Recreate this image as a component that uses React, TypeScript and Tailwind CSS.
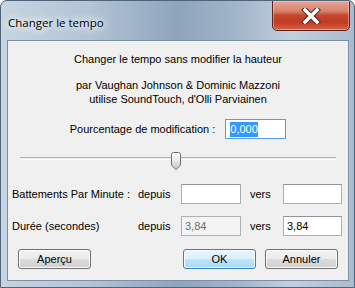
import React from "react";

const font = {fontFamily: '"Liberation Sans", Arial, sans-serif'};

const Button = ({label, primary}: { label: string, primary?: boolean }) => (
  <button
    className={primary
      ? "w-[73px] h-[20px] rounded-[3px] border border-[#3c7fb1] bg-[linear-gradient(#eaf6fd_0%,#d9f0fc_50%,#bee6fd_50%,#a7d9f5_100%)] shadow-[inset_0_0_0_1px_#f4fbff] text-[11px] text-black leading-none"
      : "w-[73px] h-[20px] rounded-[3px] border border-[#707070] bg-[linear-gradient(#f2f2f2_0%,#ebebeb_50%,#dddddd_50%,#cfcfcf_100%)] shadow-[inset_0_0_0_1px_#fcfcfc] text-[11px] text-black leading-none"}
  >
    {label}
  </button>
)

const Field = ({value, disabled, width = "w-[60px]"}: { value?: string, disabled?: boolean, width?: string }) => (
  <div
    className={(disabled
      ? "bg-[#f4f4f4] border-[#adb2b5] text-[#6d6d6d] "
      : "bg-white border-[#abadb3] border-t-[#8f949c] text-black ") + width + " h-[20px] border flex items-center px-[3px] text-[11px]"}
  >
    {value}
  </div>
)

const SliderThumb = () => (
  <svg width="12" height="19" viewBox="0 0 12 19">
    <defs>
      <linearGradient id="th" x1="0" x2="0" y1="0" y2="1">
        <stop offset="0" stopColor="#f8f8f8"/>
        <stop offset="0.5" stopColor="#ececec"/>
        <stop offset="0.55" stopColor="#dcdcdc"/>
        <stop offset="1" stopColor="#cfcfcf"/>
      </linearGradient>
    </defs>
    <path d="M1.5 2.5 Q1.5 0.5 3.5 0.5 L8.5 0.5 Q10.5 0.5 10.5 2.5 L10.5 13 L6 17.8 L1.5 13 Z" fill="url(#th)" stroke="#707070"/>
  </svg>
)

const CloseButton = () => (
  <div className="mt-[-1px] mr-[4px] w-[78px] h-[31px] rounded-b-[5px] border border-[#5e2118] bg-[linear-gradient(#e7a594_0%,#d9826c_35%,#c4452d_50%,#c23c22_75%,#d4644a_100%)] shadow-[inset_0_0_0_1px_rgba(255,220,210,0.45)] flex items-center justify-center">
    <svg width="20" height="16" viewBox="0 0 20 16">
      <path d="M4 2 L16 14 M16 2 L4 14" stroke="#4a2a26" strokeWidth="5.5" strokeLinecap="square"/>
      <path d="M4 2 L16 14 M16 2 L4 14" stroke="#ffffff" strokeWidth="3.5" strokeLinecap="square"/>
    </svg>
  </div>
)

const App = () => {
  return (
    <div style={font} className="w-[355px] h-[288px] flex flex-col rounded-t-[7px] border border-[#4f6379] bg-[linear-gradient(90deg,#c7d4e1_0%,#b3c4d5_25%,#8ea5bc_50%,#a3b6ca_68%,#c2d0de_82%,#a9bbcd_100%)] overflow-hidden">
      <div className="h-[39px] flex justify-between items-start shrink-0">
        <div
          className="pl-[7px] pt-[13px] text-[11.5px] text-black"
          style={{fontFamily: '"Open Sans", "Noto Sans", sans-serif', textShadow: "0 0 8px #fff, 0 0 8px #fff, 0 0 12px #fff"}}
        >
          Changer le tempo
        </div>
        <CloseButton/>
      </div>

      <div className="ml-[6px] mr-[5px] h-[241px] border border-[#7d8fa4] bg-[#f0f0f0] flex flex-col text-[11px] text-black whitespace-nowrap">
        <div className="pt-[11px] leading-[14px] text-center">Changer le tempo sans modifier la hauteur</div>
        <div className="mt-[12px] leading-[14px] text-center">
          <div>par Vaughan Johnson &amp; Dominic Mazzoni</div>
          <div>utilise SoundTouch, d'Olli Parviainen</div>
        </div>

        <div className="mt-[13px] flex items-center justify-center gap-[10px]">
          <span>Pourcentage de modification :</span>
          <div className="w-[61px] h-[20px] border border-[#569de5] bg-white flex items-center px-[4px]">
            <span className="bg-[#3399ff] text-white leading-[15px]">0,000</span>
          </div>
        </div>

        <div className="mt-[13px] h-[18px] relative mx-[12px]">
          <div className="absolute left-0 right-0 top-[5px] h-[3px] border-t border-[#b5b5b5] border-b border-b-white bg-[#e7e7e7]"/>
          <div className="absolute left-[150px] top-0">
            <SliderThumb/>
          </div>
        </div>

        <div className="mt-[14px] flex items-center pl-[4px]">
          <span className="w-[126px]">Battements Par Minute :</span>
          <span className="w-[43px]">depuis</span>
          <Field/>
          <span className="w-[42px] pl-[9px]">vers</span>
          <Field width="w-[59px]"/>
        </div>

        <div className="mt-[12px] flex items-center pl-[4px]">
          <span className="w-[126px]">Durée (secondes)</span>
          <span className="w-[43px]">depuis</span>
          <Field value="3,84" disabled/>
          <span className="w-[42px] pl-[9px]">vers</span>
          <Field value="3,84" width="w-[59px]"/>
        </div>

        <div className="mt-[13px] flex items-center pl-[10px]">
          <Button label="Aperçu"/>
          <div className="ml-[92px]">
            <Button label="OK" primary/>
          </div>
          <div className="ml-[9px]">
            <Button label="Annuler"/>
          </div>
        </div>
      </div>
    </div>
  )
}
export default App;
